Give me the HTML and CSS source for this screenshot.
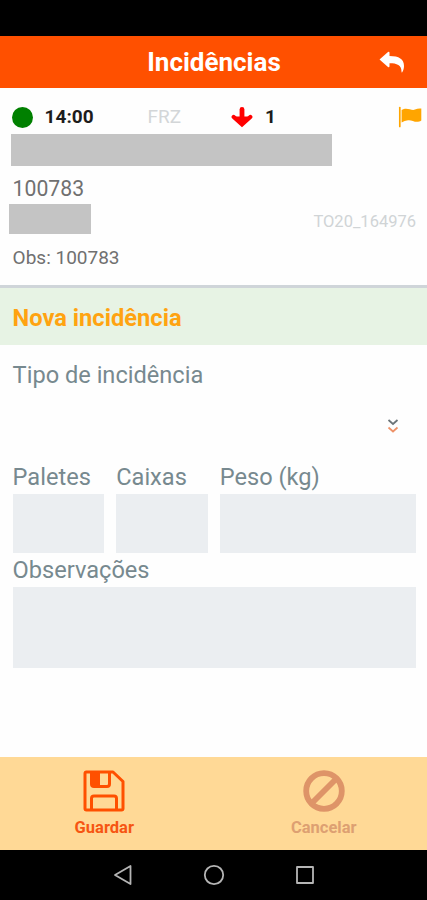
FILE: index.html
```html
<!DOCTYPE html>
<html lang="pt">
<head>
    <meta charset="UTF-8">
    <meta name="viewport" content="width=device-width, initial-scale=1.0">
    <title>Incidências</title>
    <link rel="stylesheet" href="styles.css">
</head>
<body>
    <div class="status-bar"></div>

    <header class="header">
        <h1>Incidências</h1>
        <button class="back" aria-label="Voltar">
            <svg width="26" height="22" viewBox="0 0 26 22">
                <path d="M0.5 8.5 L9 1 Q10.5 0 10.5 2 V5 C20 5 25 8 25 15 C25 17.5 24.3 19.7 23.2 21.3 Q22.5 22 22.5 20.5 C22.5 14 18 12.3 10.5 12.3 V15.2 Q10.3 17 9 16 Z" fill="#fff"/>
            </svg>
        </button>
    </header>

    <section class="order">
        <div class="order-row">
            <span class="dot"></span>
            <span class="time">14:00</span>
            <span class="type">FRZ</span>
            <svg class="arrow" width="22" height="21" viewBox="0 0 22 21">
                <path d="M11 2.500 V16" fill="none" stroke="#f00" stroke-width="4.800" stroke-linecap="round"/>
                <path d="M2.700 10 L11 17.500 L19.300 10" fill="none" stroke="#f00" stroke-width="4.200" stroke-linecap="round"/>
                <path d="M4 9.500 H18 L11 17 Z" fill="#f00"/>
            </svg>
            <span class="count">1</span>
            <svg class="flag" width="24" height="22" viewBox="0 0 24 22">
                <path d="M1.8 1.5 V20.500" stroke="#ffa500" stroke-width="1.7" stroke-linecap="round"/>
                <path d="M3.6 4 C9 0.5 13 5 17 3.6 Q20 2.2 23.3 2.6 V14.5 C18 18 14 13.5 10 14.3 Q6.500 14.8 3.600 16.500 Z" fill="#ffa500"/>
            </svg>
        </div>
        <div class="masked masked-name"></div>
        <div class="number">100783</div>
        <div class="ref-row">
            <div class="masked masked-code"></div>
            <span class="ref">TO20_164976</span>
        </div>
        <div class="obs">Obs: 100783</div>
    </section>

    <h2 class="section-title">Nova incidência</h2>

    <main class="form">
        <label class="label">Tipo de incidência</label>
        <div class="select">
            <svg width="12" height="16" viewBox="0 0 12 16" fill="none" stroke-width="1.7">
                <path d="M1.500 2 L6 6 L10.500 2" stroke="#6b7478"/>
                <path d="M1.500 9.500 L6 13.500 L10.500 9.500" stroke="#ee9268"/>
            </svg>
        </div>

        <div class="fields">
            <div class="field">
                <label class="label" for="paletes">Paletes</label>
                <input id="paletes" type="text">
            </div>
            <div class="field">
                <label class="label" for="caixas">Caixas</label>
                <input id="caixas" type="text">
            </div>
            <div class="field">
                <label class="label" for="peso">Peso (kg)</label>
                <input id="peso" type="text">
            </div>
        </div>

        <label class="label" for="obs">Observações</label>
        <textarea id="obs"></textarea>
    </main>

    <footer class="actions">
        <button class="action save">
            <svg width="42" height="42" viewBox="0 0 42 42" fill="none" stroke="#ff5000" stroke-width="3" stroke-linejoin="round">
                <path d="M3 2 H30 L40 11.500 V38.500 Q40 40 38.500 40 H3.500 Q2 40 2 38.500 V3.500 Q2 2 3.500 2 Z"/>
                <path d="M8.500 2 V14 Q8.500 16.500 11 16.500 H24 Q26.500 16.500 26.500 14 V2"/>
                <path d="M8.500 2 H17 V16.500 H8.500 Z" fill="#ff5000" stroke="none"/>
                <path d="M8.500 40 V28.500 Q8.500 26 11 26 H31 Q33.500 26 33.500 28.500 V40"/>
            </svg>
            <span>Guardar</span>
        </button>
        <button class="action cancel">
            <svg width="42" height="42" viewBox="0 0 42 42" fill="none" stroke="#de9468" stroke-width="5.800">
                <circle cx="21" cy="21" r="17.800"/>
                <path d="M8.500 33.500 L33.500 8.500"/>
            </svg>
            <span>Cancelar</span>
        </button>
    </footer>

    <nav class="nav-bar">
        <svg width="20" height="22" viewBox="0 0 20 22"><path d="M2 11 L17.500 2 V20 Z"/></svg>
        <svg width="22" height="22" viewBox="0 0 22 22"><circle cx="11" cy="11" r="9.200"/></svg>
        <svg width="20" height="22" viewBox="0 0 20 22"><path d="M2 3 H18 V19 H2 Z"/></svg>
    </nav>
</body>
</html>
```
FILE: styles.css
```css
* {
    box-sizing: border-box;
}

body {
    display: flex;
    flex-direction: column;
    height: 900px;
    margin: 0;
    font-family: Roboto, sans-serif;
    background: #fefefe;
    overflow: hidden;
}

button {
    padding: 0;
    border: none;
    background: none;
    font-family: inherit;
}

svg {
    display: block;
}

.status-bar {
    height: 36px;
    background: #000;
}

.header {
    display: grid;
    grid-template-columns: 1fr auto 1fr;
    align-items: center;
    height: 52px;
    padding-right: 22px;
    padding-left: 23px;
    background: #ff5000;
}

.header h1 {
    grid-column: 2;
    margin: 0;
    color: #fff;
    font-size: 26px;
    font-weight: bold;
    line-height: 52px;
}

.back {
    justify-self: end;
}

/* Order summary */
.order {
    height: 200px;
    padding: 17px 11px 0 12.6px;
    border-bottom: 3px solid #cfd5d9;
    color: #707070;
}

.order-row {
    display: grid;
    grid-template-columns: 32px 103px 83.4px 34px 1fr auto;
    align-items: center;
    height: 24px;
    margin-right: -6px;
    font-size: 19px;
    line-height: 22px;
}

.dot {
    width: 21px;
    height: 21px;
    margin-left: -1px;
    border-radius: 50%;
    background: #008000;
}

.time,
.count {
    color: #1c1c1c;
    font-weight: bold;
}

.type {
    color: #d3d6d8;
}

.masked {
    background: #c4c4c4;
}

.masked-name {
    width: 321px;
    height: 32px;
    margin: 5px 0 0 -2px;
}

.number {
    height: 38px;
    font-size: 21.2px;
    line-height: 45px;
}

.ref-row {
    display: flex;
    align-items: center;
    justify-content: space-between;
    height: 30px;
}

.masked-code {
    width: 82px;
    height: 30px;
    margin-left: -3.6px;
}

.ref {
    padding-top: 5px;
    color: #d0d4d6;
    font-size: 16.5px;
}

.obs {
    font-size: 19px;
    line-height: 48px;
}

.section-title {
    height: 57px;
    margin: 0;
    padding-left: 12.5px;
    background: #e7f3e4;
    color: #ffa311;
    font-size: 23.7px;
    font-weight: bold;
    line-height: 60px;
}

/* Form */
.form {
    flex: 1;
    padding: 15px 11px 0 12.6px;
}

.label {
    display: block;
    height: 32px;
    color: #77898f;
    font-size: 23.6px;
    line-height: 30px;
}

.select {
    display: flex;
    align-items: center;
    justify-content: flex-end;
    height: 70px;
    padding: 0 17px 3px 0;
}

.fields {
    display: grid;
    grid-template-columns: 91.6px 91.6px 1fr;
    gap: 12px;
}

input,
textarea {
    display: block;
    width: 100%;
    margin: 0;
    border: none;
    border-radius: 0;
    background: #ebeef1;
    resize: none;
}

input {
    height: 59px;
    margin-bottom: 2px;
}

textarea {
    height: 81px;
}

/* Bottom actions */
.actions {
    display: grid;
    grid-template-columns: 1fr 1fr;
    height: 93px;
    background: #ffd996;
}

.action {
    display: flex;
    flex-direction: column;
    align-items: center;
    padding-top: 13px;
    font-size: 16.5px;
    font-weight: bold;
    line-height: 20px;
}

.action span {
    margin-top: 6px;
}

.save {
    padding-right: 5px;
    color: #f65512;
}

.cancel {
    padding-left: 7px;
    color: #dda072;
}

.nav-bar {
    display: flex;
    align-items: center;
    justify-content: center;
    gap: 70px;
    height: 50px;
    background: #000;
}

.nav-bar svg {
    fill: none;
    stroke: #b5b5b5;
    stroke-width: 1.8;
    stroke-linejoin: round;
}
```
